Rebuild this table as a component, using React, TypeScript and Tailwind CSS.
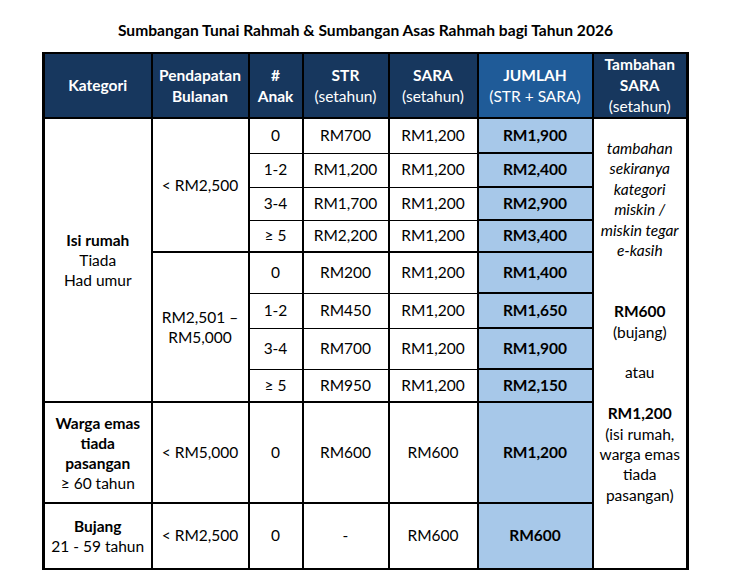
import React from "react";

type Row = [string, string, string, string, number];

const group1: Row[] = [
  ["0", "RM700", "RM1,200", "RM1,900", 35],
  ["1-2", "RM1,200", "RM1,200", "RM2,400", 34],
  ["3-4", "RM1,700", "RM1,200", "RM2,900", 33],
  ["≥ 5", "RM2,200", "RM1,200", "RM3,400", 32],
];

const group2: Row[] = [
  ["0", "RM200", "RM1,200", "RM1,400", 41],
  ["1-2", "RM450", "RM1,200", "RM1,650", 35],
  ["3-4", "RM700", "RM1,200", "RM1,900", 41],
  ["≥ 5", "RM950", "RM1,200", "RM2,150", 33],
];

function subCls(i: number, n: number) {
  const top = i === 0 ? "border-t-2" : "border-t";
  const bottom = i === n - 1 ? "border-b-2" : "border-b";
  return `border-x-2 ${top} ${bottom} border-black text-center align-middle p-0`;
}

const jumlahCls = "border-2 border-black text-center align-middle p-0 bg-[#a7c8e9] font-bold";

export default function App() {
  const renderGroup = (rows: Row[], first: boolean, income: React.ReactNode) =>
    rows.map((r, i) => (
      <tr key={r[0] + r[1] + i} style={{ height: r[4] }}>
        {first && i === 0 && (
          <td
            rowSpan={8}
            className="border-2 border-black text-center align-middle p-0 leading-[20px]"
          >
            <div className="font-bold">Isi rumah</div>
            <div>Tiada</div>
            <div>Had umur</div>
          </td>
        )}
        {i === 0 && (
          <td
            rowSpan={4}
            className="border-2 border-black text-center align-middle p-0 leading-[20px]"
          >
            {income}
          </td>
        )}
        <td className={subCls(i, rows.length)}>{r[0]}</td>
        <td className={subCls(i, rows.length)}>{r[1]}</td>
        <td className={subCls(i, rows.length)}>{r[2]}</td>
        <td className={jumlahCls}>{r[3]}</td>
        {first && i === 0 && (
          <td
            rowSpan={10}
            className="border-2 border-black text-center align-top p-0 pt-[19px] leading-[20.4px]"
          >
            <div className="italic">
              <div>tambahan</div>
              <div>sekiranya</div>
              <div>kategori</div>
              <div>miskin /</div>
              <div>miskin tegar</div>
              <div>e-kasih</div>
            </div>
            <div className="h-[40.8px]" />
            <div className="font-bold">RM600</div>
            <div>(bujang)</div>
            <div className="h-[20.4px]" />
            <div>atau</div>
            <div className="h-[20.4px]" />
            <div className="font-bold">RM1,200</div>
            <div>(isi rumah,</div>
            <div>warga emas</div>
            <div>tiada</div>
            <div>pasangan)</div>
          </td>
        )}
      </tr>
    ));

  return (
    <div className="min-h-[585px] w-[737px] bg-white font-['Lato','Open_Sans',sans-serif] text-[15.5px] text-black">
      <div className="ml-[42px] w-[647px] pt-[20px]">
        <h1 className="text-center text-[15.6px] font-bold leading-[20px] h-[32px]">
          Sumbangan Tunai Rahmah &amp; Sumbangan Asas Rahmah bagi Tahun 2026
        </h1>
        <table className="w-[647px] table-fixed border-collapse border-x-[3px] border-y-2 border-black">
          <colgroup>
            <col className="w-[108px]" />
            <col className="w-[97px]" />
            <col className="w-[54px]" />
            <col className="w-[86px]" />
            <col className="w-[89px]" />
            <col className="w-[115px]" />
            <col className="w-[95px]" />
          </colgroup>
          <thead>
            <tr className="h-[64px] text-white leading-[21px]">
              <th className="border-2 border-black bg-[#17375e] p-0 font-bold">Kategori</th>
              <th className="border-2 border-black bg-[#17375e] p-0 font-bold">
                Pendapatan
                <br />
                Bulanan
              </th>
              <th className="border-2 border-black bg-[#17375e] p-0 font-bold">
                #
                <br />
                Anak
              </th>
              <th className="border-2 border-black bg-[#17375e] p-0">
                <div className="font-bold">STR</div>
                <div className="font-normal">(setahun)</div>
              </th>
              <th className="border-2 border-black bg-[#17375e] p-0">
                <div className="font-bold">SARA</div>
                <div className="font-normal">(setahun)</div>
              </th>
              <th className="border-2 border-black bg-[#1f5b98] p-0">
                <div className="font-bold">JUMLAH</div>
                <div className="font-normal">(STR + SARA)</div>
              </th>
              <th className="border-2 border-black bg-[#17375e] p-0">
                <div className="font-bold">Tambahan</div>
                <div className="font-bold">SARA</div>
                <div className="font-normal">(setahun)</div>
              </th>
            </tr>
          </thead>
          <tbody>
            {renderGroup(group1, true, "< RM2,500")}
            {renderGroup(
              group2,
              false,
              <>
                <div>RM2,501 –</div>
                <div>RM5,000</div>
              </>
            )}
            <tr className="h-[101px]">
              <td className="border-2 border-black text-center align-middle p-0 leading-[20px]">
                <div className="font-bold">Warga emas</div>
                <div className="font-bold">tiada</div>
                <div className="font-bold">pasangan</div>
                <div>≥ 60 tahun</div>
              </td>
              <td className="border-2 border-black text-center align-middle p-0">&lt; RM5,000</td>
              <td className="border-2 border-black text-center align-middle p-0">0</td>
              <td className="border-2 border-black text-center align-middle p-0">RM600</td>
              <td className="border-2 border-black text-center align-middle p-0">RM600</td>
              <td className={jumlahCls}>RM1,200</td>
            </tr>
            <tr className="h-[66px]">
              <td className="border-2 border-black text-center align-middle p-0 leading-[20px]">
                <div className="font-bold">Bujang</div>
                <div>21 - 59 tahun</div>
              </td>
              <td className="border-2 border-black text-center align-middle p-0">&lt; RM2,500</td>
              <td className="border-2 border-black text-center align-middle p-0">0</td>
              <td className="border-2 border-black text-center align-middle p-0">-</td>
              <td className="border-2 border-black text-center align-middle p-0">RM600</td>
              <td className={jumlahCls}>RM600</td>
            </tr>
          </tbody>
        </table>
      </div>
    </div>
  );
}
